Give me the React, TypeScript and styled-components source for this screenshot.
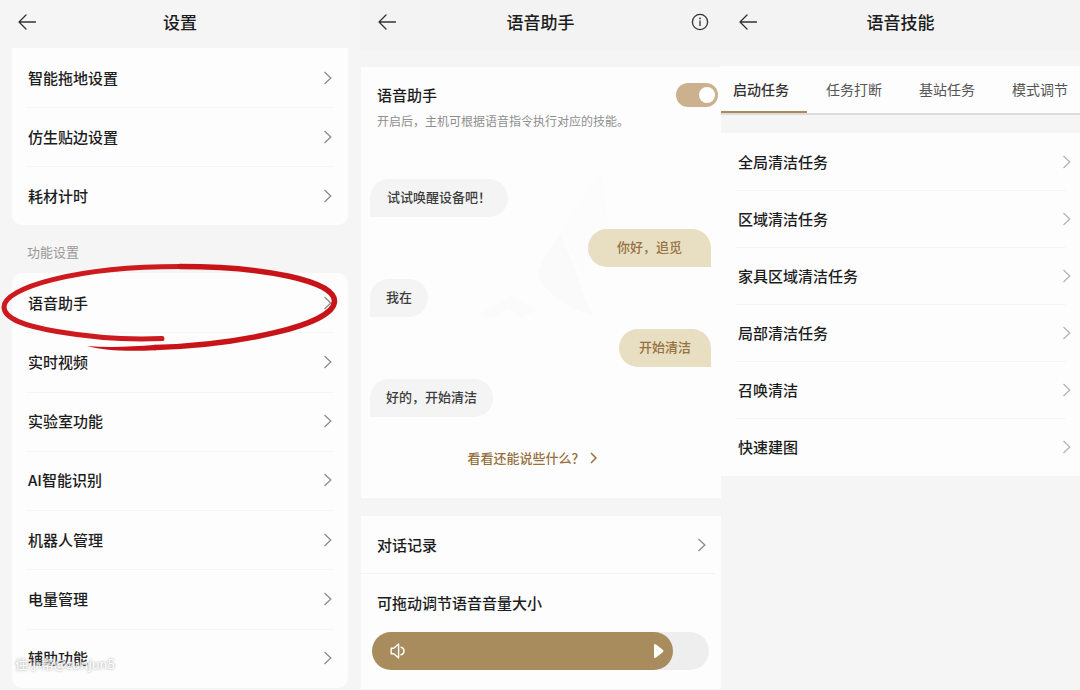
import React, { useState } from "react";
import styled, { createGlobalStyle } from "styled-components";

const GlobalStyle = createGlobalStyle`
  *, *::before, *::after { box-sizing: border-box; }
  body {
    margin: 0;
    background: #f5f5f5;
    color: #1c1c1c;
    font-family: "Noto Sans CJK SC", "Noto Sans", sans-serif;
    font-size: 15px;
  }
  button { border: 0; background: none; padding: 0; color: inherit; font: inherit; cursor: pointer; }
  a { color: inherit; text-decoration: none; }
  h1, h2, p, ul { margin: 0; padding: 0; font-weight: inherit; }
  ul { list-style: none; }
  svg { display: block; flex: none; }
`;

const Screens = styled.div`
  display: grid;
  grid-template-columns: 360fr 361fr 359fr;
  min-height: 100vh;
`;

const Screen = styled.main`
  display: flex;
  flex-direction: column;
  min-width: 0;
`;

const Header = styled.header<{ $tint?: boolean; $tall?: boolean }>`
  display: grid;
  grid-template-columns: 40px 1fr 40px;
  align-items: center;
  height: ${(p) => (p.$tall ? 50 : 48)}px;
  padding: 0 0 ${(p) => (p.$tall ? 6 : 4)}px;
  background: ${(p) => (p.$tint ? "#f3f3f3" : "transparent")};
`;

const ScreenTitle = styled.h1`
  font-size: 17px;
  line-height: 24px;
  font-weight: 500;
  text-align: center;
`;

const IconButton = styled.button<{ $end?: boolean }>`
  display: flex;
  justify-content: ${(p) => (p.$end ? "flex-start" : "flex-end")};
  padding: ${(p) => (p.$end ? "0 0 0 10px" : "0 4px 0 0")};
  color: #333;
`;

const Card = styled.ul<{ $fill?: boolean }>`
  display: flex;
  flex-direction: column;
  flex: ${(p) => (p.$fill ? "1" : "none")};
  margin: 0 12px ${(p) => (p.$fill ? 2 : 0)}px;
  border-radius: ${(p) => (p.$fill ? "10px" : "0 0 10px 10px")};
  background: #fdfdfd;
`;

const Item = styled.li<{ $grow?: boolean }>`
  position: relative;
  display: flex;
  flex: ${(p) => (p.$grow ? "1" : "none")};
  padding: 0 14px;
  & + &::before {
    content: "";
    position: absolute;
    top: 0;
    left: 14px;
    right: 14px;
    height: 1px;
    background: #f6f6f6;
  }
`;

const RowLink = styled.a<{ $height: number; $muted?: boolean }>`
  display: flex;
  flex: 1;
  align-items: center;
  justify-content: space-between;
  min-height: ${(p) => p.$height}px;
  padding: 0 2px;
  font-weight: 500;
  line-height: 24px;
  svg { color: ${(p) => (p.$muted ? "#b4b4b4" : "#8c8c8c")}; }
`;

const GroupLabel = styled.h2`
  padding: 0 27px;
  color: #999;
  font-size: 13px;
  line-height: 20px;
  margin: 17px 0 11px;
`;

const Mark = styled.svg`
  position: absolute;
  left: -12px;
  top: -12px;
  z-index: 1;
  pointer-events: none;
`;

const Watermark = styled.span`
  position: absolute;
  left: 3px;
  bottom: 14px;
  color: #fff;
  font-size: 13px;
  line-height: 20px;
  opacity: 0.85;
  text-shadow: 0 0 2px #aaa, 0 0 3px #bbb;
  pointer-events: none;
`;

const Panel = styled.section<{ $top: number }>`
  position: relative;
  margin: ${(p) => p.$top}px 0 0 1px;
  background: #fdfdfd;
`;

const SwitchRow = styled.div`
  display: flex;
  justify-content: space-between;
  padding: 16px 3px 0 16px;
`;

const SwitchLabel = styled.label`
  font-weight: 500;
  line-height: 24px;
`;

const Switch = styled.input`
  appearance: none;
  display: flex;
  align-items: center;
  justify-content: flex-end;
  width: 42px;
  height: 24px;
  margin: 0;
  padding: 0 3px;
  border-radius: 12px;
  background: #ccb18f;
  cursor: pointer;
  &::before {
    content: "";
    width: 16px;
    height: 16px;
    border-radius: 50%;
    background: #fff;
  }
  &:not(:checked) { justify-content: flex-start; background: #d8d8d8; }
`;

const Hint = styled.p`
  padding: 5px 16px 0;
  color: #8e8e8e;
  font-size: 12px;
  line-height: 18px;
`;

const Chat = styled.div`
  position: relative;
  display: flex;
  flex-direction: column;
  gap: 12px;
  padding: 49px 10px 0 9px;
`;

const Bubble = styled.p<{ $mine?: boolean; $pad: number }>`
  position: relative;
  align-self: ${(p) => (p.$mine ? "flex-end" : "flex-start")};
  padding: 8px ${(p) => p.$pad}px 10px;
  border-radius: ${(p) => (p.$mine ? "19px 19px 0 19px" : "19px 19px 19px 0")};
  background: ${(p) => (p.$mine ? "#e8dfc3" : "#f4f4f4")};
  color: ${(p) => (p.$mine ? "#96703f" : "#3c3c3c")};
  font-size: 13px;
  font-weight: 500;
  line-height: 20px;
`;

const Backdrop = styled.svg`
  position: absolute;
  left: 0;
  top: 0;
`;

const MoreLink = styled.a`
  display: flex;
  align-items: center;
  justify-content: center;
  gap: 5px;
  padding: 31px 18px 30px 0;
  color: #96703f;
  font-size: 13px;
  font-weight: 500;
  line-height: 20px;
`;

const RecordRow = styled.div`
  display: flex;
  padding: 0 7px 0 14px;
  margin-right: 6px;
  border-bottom: 1px solid #f3f3f3;
`;

const VolumeLabel = styled.label`
  display: block;
  padding: 17px 16px;
  font-weight: 500;
  line-height: 24px;
`;

const Volume = styled.div`
  position: relative;
  display: flex;
  margin: 0 12px 19px 11px;
`;

const VolumeInput = styled.input`
  appearance: none;
  flex: 1;
  min-width: 0;
  height: 38px;
  margin: 0;
  border-radius: 19px;
  overflow: hidden;
  cursor: pointer;
  &::-webkit-slider-thumb {
    appearance: none;
    width: 38px;
    height: 38px;
    border-radius: 50%;
    background: #a98c5e;
  }
`;

const VolumeIcon = styled.span`
  position: absolute;
  left: 18px;
  top: 11px;
  pointer-events: none;
`;

const VolumeHandle = styled.span`
  position: absolute;
  top: 11px;
  pointer-events: none;
`;

const Tabs = styled.div`
  display: flex;
  gap: 7px;
  height: 49px;
  margin-top: 16px;
  overflow: hidden;
  border-bottom: 2px solid #dcdddb;
  background: #fdfdfd;
`;

const TabSlot = styled.button<{ $active?: boolean }>`
  flex: none;
  width: 86px;
  padding: 0 12px 2px;
  color: ${(p) => (p.$active ? "#333" : "#555")};
  font-size: 14px;
  font-weight: ${(p) => (p.$active ? 500 : 400)};
  text-align: left;
  white-space: nowrap;
  box-shadow: ${(p) => (p.$active ? "inset 0 -2px #a98c5e" : "none")};
`;

const SkillList = styled.ul`
  margin-top: 18px;
  padding-bottom: 1px;
  background: #fdfdfd;
  ${Item} { padding: 0 7px 0 15px; }
`;

const Chevron = () => (
  <svg width="9" height="14" viewBox="0 0 9 14" fill="none" stroke="currentColor" strokeWidth="1.3">
    <path d="M1.5 1 7.8 7 1.5 13" />
  </svg>
);

const BackArrow = () => (
  <svg width="18" height="16" viewBox="0 0 18 16" fill="none" stroke="currentColor" strokeWidth="1.3" strokeLinecap="round" strokeLinejoin="round">
    <path d="M8 1 1 8l7 7M1 8h16.5" />
  </svg>
);

const InfoIcon = () => (
  <svg width="18" height="18" viewBox="0 0 18 18" fill="none" stroke="currentColor" strokeWidth="1.3">
    <circle cx="9" cy="9" r="7.6" />
    <path d="M9 7.600v5.400" strokeWidth="1.3" />
    <circle cx="9" cy="5.4" r=".9" fill="currentColor" stroke="none" />
  </svg>
);

const SpeakerIcon = () => (
  <svg width="16" height="16" viewBox="0 0 16 16" fill="none" stroke="#fff" strokeWidth="1.4" strokeLinejoin="round" strokeLinecap="round">
    <path d="M1.2 5.2h2.6L8.6 1v14L3.8 10.8H1.2z" />
    <path d="M11 4.2c4 .6 4 7 0 7.600" />
  </svg>
);

const PenCircle = () => (
  <Mark width="344" height="94" viewBox="0 262 344 94" aria-hidden="true">
    <g fill="none" stroke="#cc1a1f" strokeLinecap="round" strokeLinejoin="round">
      <path strokeWidth="5" d="M162 339.500C130 341 95 339 57 332.500 25 327 4 320 4 308 4 289 75 267.500 180 267.500" />
      <path strokeWidth="5.500" stroke="#c81418" d="M180 267.500C265 267.500 334.500 282 334.500 302 334.500 327 235 346 155 348.500" />
    </g>
    <path fill="#c81418" d="M87 347C108 348.600 130 348 156 345.800L156 351.200C128 352.600 106 352 87 347Z" />
  </Mark>
);

const basicSettings = ["智能拖地设置", "仿生贴边设置", "耗材计时"];
const featureSettings = ["语音助手", "实时视频", "实验室功能", "AI智能识别", "机器人管理", "电量管理", "辅助功能"];
const tabs = ["启动任务", "任务打断", "基站任务", "模式调节"];
const skills = ["全局清洁任务", "区域清洁任务", "家具区域清洁任务", "局部清洁任务", "召唤清洁", "快速建图"];
const messages = [
  { text: "试试唤醒设备吧！", mine: false, pad: 17 },
  { text: "你好，追觅", mine: true, pad: 29 },
  { text: "我在", mine: false, pad: 16 },
  { text: "开始清洁", mine: true, pad: 20 },
  { text: "好的，开始清洁", mine: false, pad: 16 },
];

function TopBar({ title, info, tint }: { title: string; info?: boolean; tint?: boolean }) {
  return (
    <Header $tint={tint} $tall={tint}>
      <IconButton aria-label="返回"><BackArrow /></IconButton>
      <ScreenTitle>{title}</ScreenTitle>
      {info && <IconButton $end aria-label="说明"><InfoIcon /></IconButton>}
    </Header>
  );
}

export default function App() {
  const [enabled, setEnabled] = useState(true);
  const [volume, setVolume] = useState(88);
  const [tab, setTab] = useState(0);
  const handle = `calc(19px + (100% - 38px) * ${volume / 100})`;

  return (
    <>
      <GlobalStyle />
      <Screens>
        <Screen>
          <TopBar title="设置" />
          <Card>
            {basicSettings.map((name) => (
              <Item key={name}>
                <RowLink href="#" $height={59}>{name}<Chevron /></RowLink>
              </Item>
            ))}
          </Card>
          <GroupLabel>功能设置</GroupLabel>
          <Card $fill>
            {featureSettings.map((name, i) => (
              <Item key={name} $grow>
                <RowLink href="#" $height={56}>{name}<Chevron /></RowLink>
                {i === 0 && <PenCircle />}
                {i === featureSettings.length - 1 && <Watermark>住小帮@zunjun5</Watermark>}
              </Item>
            ))}
          </Card>
        </Screen>

        <Screen>
          <TopBar title="语音助手" info tint />
          <Panel $top={17}>
            <SwitchRow>
              <SwitchLabel htmlFor="assistant">语音助手</SwitchLabel>
              <Switch id="assistant" type="checkbox" role="switch" checked={enabled} onChange={(e) => setEnabled(e.target.checked)} />
            </SwitchRow>
            <Hint>开启后，主机可根据语音指令执行对应的技能。</Hint>
            <Chat>
              <Backdrop width="360" height="300" viewBox="0 0 360 300" aria-hidden="true">
                <path fill="#fcfcfc" d="M199 104 240 40 248 100 222 140Z" />
                <path fill="#fafafa" d="M199 104C207 122 216 142 221 160L232 186C212 180 186 164 178 148 176 134 188 120 199 104Z" />
                <path fill="#fbfbfb" d="M118 184 150 166 176 180 160 188 148 178 132 190Z" />
              </Backdrop>
              {messages.map((m) => (
                <Bubble key={m.text} $mine={m.mine} $pad={m.pad}>{m.text}</Bubble>
              ))}
            </Chat>
            <MoreLink href="#">
              看看还能说些什么？
              <svg width="7" height="12" viewBox="0 0 7 12" fill="none" stroke="currentColor" strokeWidth="1.500">
                <path d="M1 1l5 5-5 5" />
              </svg>
            </MoreLink>
          </Panel>
          <Panel $top={18}>
            <RecordRow>
              <RowLink href="#" $height={57}>对话记录<Chevron /></RowLink>
            </RecordRow>
            <VolumeLabel htmlFor="volume">可拖动调节语音音量大小</VolumeLabel>
            <Volume>
              <VolumeInput
                id="volume"
                type="range"
                min={0}
                max={100}
                value={volume}
                onChange={(e) => setVolume(Number(e.target.value))}
                style={{ background: `linear-gradient(to right, #a98c5e ${handle}, #eeeeee ${handle})` }}
              />
              <VolumeIcon><SpeakerIcon /></VolumeIcon>
              <VolumeHandle style={{ left: handle }}>
                <svg width="10" height="16" viewBox="0 0 10 16" fill="#fff">
                  <path d="M0 2Q0 .5 1.500 1.300L3 2.200 9 7Q10 8 9 9L3 13.800 1.500 14.700Q0 15.500 0 14Z" />
                </svg>
              </VolumeHandle>
            </Volume>
          </Panel>
        </Screen>

        <Screen>
          <TopBar title="语音技能" tint />
          <Tabs role="tablist">
            {tabs.map((name, i) => (
              <TabSlot key={name} role="tab" aria-selected={i === tab} $active={i === tab} onClick={() => setTab(i)}>{name}</TabSlot>
            ))}
          </Tabs>
          <SkillList>
            {skills.map((name) => (
              <Item key={name}>
                <RowLink href="#" $height={57} $muted>{name}<Chevron /></RowLink>
              </Item>
            ))}
          </SkillList>
        </Screen>
      </Screens>
    </>
  );
}
